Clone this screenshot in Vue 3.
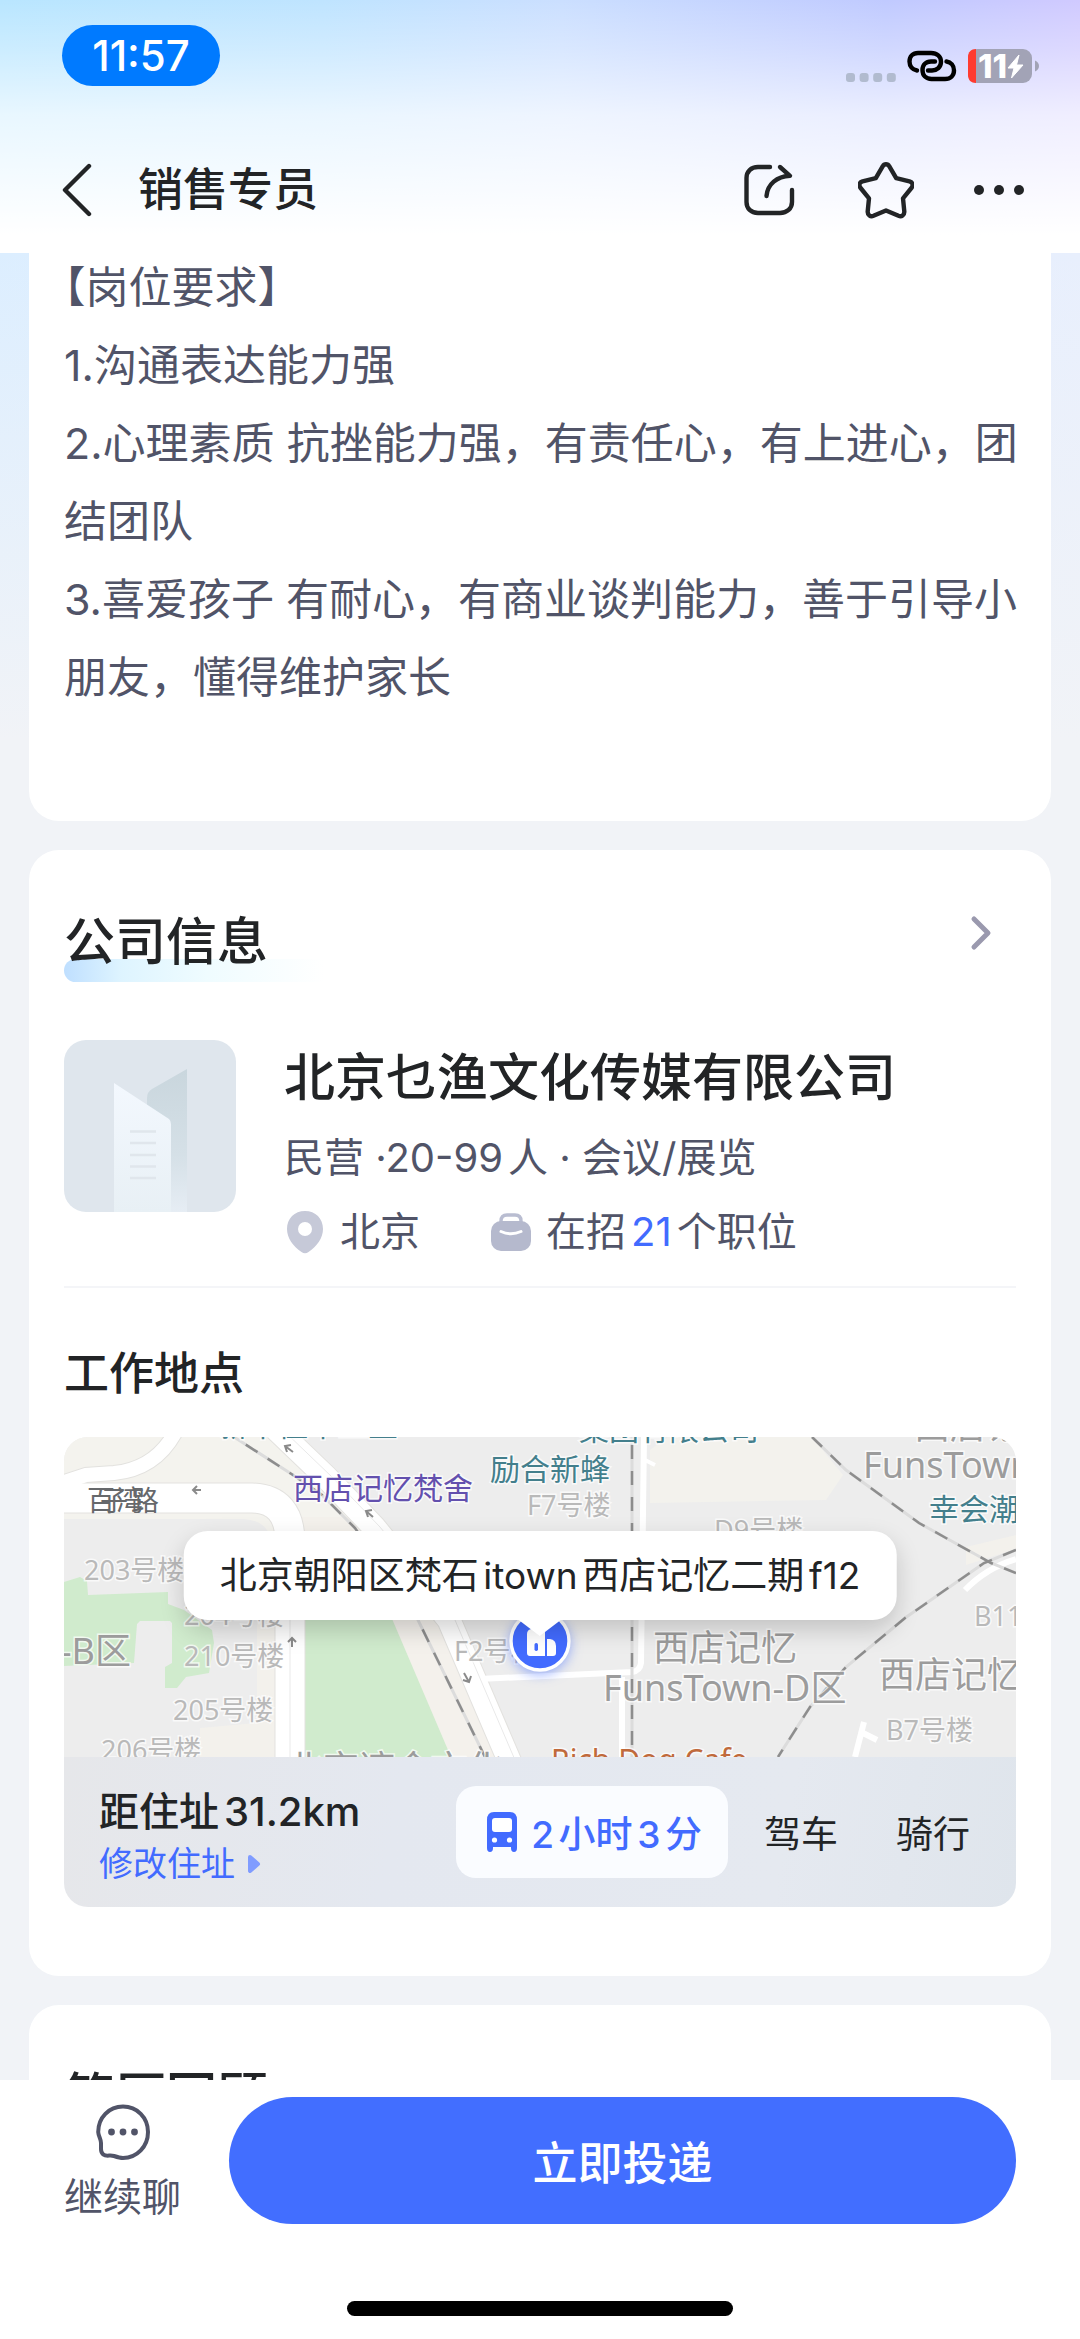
<template>
  <div class="job-page">
    <header class="top-area">
      <div class="status-bar">
        <span class="clock">11:57</span>
        <div class="status-icons">
          <svg class="signal" width="50" height="10" viewBox="0 0 50 10" aria-hidden="true">
            <rect v-for="n in 4" :key="n" :x="(n - 1) * 13.6" y="0" width="9" height="9" rx="3" fill="#b1bbcf" />
          </svg>
          <svg width="50" height="32" viewBox="0 0 50 32" fill="none" stroke="#000" stroke-width="4.4" stroke-linecap="round" aria-hidden="true">
            <path d="M10 20.5C5.6 19.8 2.5 16.5 2.5 11.5C2.5 6.5 6 3 11 3H24C30 3 34 6.5 34 11.8C34 17 30 20.5 25 20.5H21" />
            <path d="M28 11.5H24C19 11.5 15.5 15 15.5 20C15.5 25.5 19 29 24.5 29H38C43.5 29 47 25.5 47 20.5C47 15.5 44 12 39.5 11.5" />
          </svg>
          <svg width="72" height="34" viewBox="0 0 72 34" aria-hidden="true">
            <rect width="64" height="34" rx="9" fill="#a2a3b6" />
            <path d="M8 0H8V34H8C3 34 0 31 0 26V8C0 3 3 0 8 0Z" fill="#ff3b30" />
            <text x="10" y="29" class="battery-text">11</text>
            <path d="M51 6L40 19H46L43.500 29L55 16H48.500Z" fill="#fff" stroke="#fff" stroke-width="1" stroke-linejoin="round" />
            <path d="M67 11.5C69.5 12.5 71 14.5 71 17S69.5 21.5 67 22.5Z" fill="#a2a3b6" />
          </svg>
        </div>
      </div>

      <nav class="nav-bar">
        <button class="icon-button" aria-label="返回">
          <svg width="32" height="56" viewBox="0 0 32 56" fill="none" stroke="#222426" stroke-width="4.4" stroke-linecap="round" stroke-linejoin="round">
            <path d="M29 4L5 28L29 52" />
          </svg>
        </button>
        <h1 class="nav-title">销售专员</h1>
        <div class="nav-actions">
          <button class="icon-button" aria-label="分享">
            <svg width="56" height="56" viewBox="0 0 56 56" fill="none" stroke="#222426" stroke-width="4.4" stroke-linecap="round" stroke-linejoin="round">
              <path d="M28 5H16C9 5 4.5 9.5 4.5 16V40C4.5 46.5 9 51 16 51H38C45 51 50 46.5 50 40V28" />
              <path d="M38 5L48 13.8C35 14.5 25.5 22 24.5 34" />
            </svg>
          </button>
          <button class="icon-button" aria-label="收藏">
            <svg width="56" height="60" viewBox="2 0 56 60" fill="none" stroke="#222426" stroke-width="4.4" stroke-linecap="round" stroke-linejoin="round">
              <path d="M26.8 6.2C28.2 3.5 31.800 3.5 33.2 6.2L40.2 18.2L53.5 21.3C56.800 22.2 57.500 25.5 55.4 28L47 38.3L48.3 51.5C48.5 55 45.6 57 42.5 55.8L30 50.4L17.5 55.8C14.4 57 11.5 55 11.7 51.5L13 38.3L4.6 28C2.5 25.5 3.2 22.2 6.5 21.3L19.8 18.2Z" />
            </svg>
          </button>
          <button class="icon-button" aria-label="更多">
            <svg width="50" height="12" viewBox="0 0 50 12" fill="#222426">
              <circle cx="5" cy="6" r="5" />
              <circle cx="25" cy="6" r="5" />
              <circle cx="45" cy="6" r="5" />
            </svg>
          </button>
        </div>
      </nav>
    </header>

    <main class="content">
      <section class="card description">
        <p v-for="line in requirements" :key="line">{{ line }}</p>
      </section>

      <section class="card">
        <div class="card-head">
          <h2 class="card-title">公司信息</h2>
          <a href="#company" class="more-link" aria-label="查看公司">
            <svg width="26" height="42" viewBox="0 0 26 42" fill="none" stroke="#9a99ae" stroke-width="5" stroke-linecap="round" stroke-linejoin="round">
              <path d="M5 7L19 21L5 35" />
            </svg>
          </a>
        </div>

        <div class="company">
          <svg class="company-logo" viewBox="0 0 172 172" aria-hidden="true">
            <defs>
              <linearGradient id="tower-back" x1="0" y1="0" x2="0" y2="1">
                <stop offset="0" stop-color="#c9d6dd" />
                <stop offset="0.6" stop-color="#d5e0e7" />
                <stop offset="1" stop-color="#e6edf4" />
              </linearGradient>
              <linearGradient id="tower-front" x1="0" y1="0" x2="0" y2="1">
                <stop offset="0" stop-color="#f3f8fe" />
                <stop offset="1" stop-color="#e8f0f5" />
              </linearGradient>
            </defs>
            <rect width="172" height="172" fill="#dfe6ed" />
            <path d="M83 172V58Q83 52 88 49L123 29V172Z" fill="url(#tower-back)" />
            <path d="M50 43L105 79Q107 81 107 84V172H50Z" fill="url(#tower-front)" />
            <path d="M66 91.5H92M66 103H92M66 115H92M66 126.5H92M66 138H92" stroke="#e0e6ec" stroke-width="2.5" />
          </svg>
          <div class="company-text">
            <h3 class="company-name">北京乜渔文化传媒有限公司</h3>
            <p class="company-meta">民营 ·20-99人 · 会议/展览</p>
            <div class="company-facts">
              <span class="fact">
                <svg width="42" height="44" viewBox="-2 0 42 44" aria-hidden="true">
                  <path d="M19 1C29.5 1 37 8.5 37 19C37 28 31 36 22.5 42Q19 44.5 15.5 42C7 36 1 28 1 19C1 8.5 8.5 1 19 1Z" fill="#c6c9d8" />
                  <circle cx="19" cy="19" r="7" fill="#fff" />
                </svg>
                北京
              </span>
              <span class="fact">
                <svg width="42" height="40" viewBox="0 0 42 40" fill="none" aria-hidden="true">
                  <path d="M11 11V9C11 5 13 3 17 3H25C29 3 31 5 31 9V11" stroke="#b9bdd1" stroke-width="3.4" />
                  <rect x="1" y="9" width="40" height="30" rx="10" fill="#b5b9cd" />
                  <path d="M11 19.5Q21 24 31 19.5" stroke="#fff" stroke-width="3" stroke-linecap="round" />
                </svg>
                <span>在招<b class="job-count">21</b>个职位</span>
              </span>
            </div>
          </div>
        </div>

        <h3 class="place-title">工作地点</h3>

        <div class="map-card">
          <div class="map-view">
            <svg class="map-canvas" viewBox="0 0 952 320" preserveAspectRatio="xMidYMid slice">
              <rect width="952" height="320" fill="#ededed" />

              <!-- blocks of land -->
              <path d="M0 0H205L345 110H0Z" fill="#f4f3ee" />
              <path d="M0 82H180Q205 84 207 105V185H0Z" fill="#ededed" />
              <path d="M193 180H212V320H136V291L193 286Z" fill="#f3f1ec" />
              <path d="M235 80H300L375 183L432 320H235Z" fill="#f4f1ec" />
              <path d="M586 13L604 0H748L779 38L762 63L586 66Z" fill="#f3f2ed" />
              <path d="M902 110L952 98V112L902 128Z" fill="#f3f1ec" />

              <!-- greens -->
              <path d="M0 145L16 140L23 144L24 158L104 155V167L120 173L148 193L150 206L145 236L122 240L113 251H101V230L108 226V186L106 184H76L73 187L70 226L0 229Z" fill="#d0ebcd" />
              <path d="M241 170H323L387 320H241Z" fill="#d0ebcd" />

              <!-- roads -->
              <g fill="none" stroke="#e3e2df">
                <path d="M112 -6Q92 32 50 36L22 38L-6 47" stroke-width="16" />
                <path d="M-6 61H188Q226 62 226 105V326" stroke-width="31" />
                <path d="M212 -8L262 40L310 90L385 183L448 330" stroke-width="25" />
              </g>
              <g fill="none" stroke="#fff">
                <path d="M112 -6Q92 32 50 36L22 38L-6 47" stroke-width="14" />
                <path d="M-6 61H188Q226 62 226 105V326" stroke-width="29" />
                <path d="M212 -8L262 40L310 90L385 183L448 330" stroke-width="23" />
                <path d="M580 0L577 226Q576 234 568 235L415 242" stroke-width="6" />
                <path d="M558 240V320" stroke-width="6" />
                <path d="M579 22L591 28" stroke-width="4" />
                <path d="M901 153Q922 131 952 122" stroke-width="6" />
                <path d="M800 285L791 320M799 296L813 303" stroke-width="6" />
              </g>
              <path d="M218 -8L268 40L316 90L391 183L454 330M226 105V320" fill="none" stroke="#e9e9e9" stroke-width="1" />

              <!-- railways -->
              <g fill="none" stroke="#dcdcdc" stroke-width="3">
                <path d="M170 0L229 38L258 58L291 91L354 183L421 320" />
                <path d="M568 0V320" />
                <path d="M748 0L782 33L855 86L927 126L952 136" />
                <path d="M952 113L920 126L841 181L782 230L746 270L714 320" />
              </g>
              <g fill="none" stroke="#8d8d8d" stroke-width="2.5" stroke-dasharray="14 12">
                <path d="M170 0L229 38L258 58L291 91L354 183L421 320" stroke-dashoffset="12" />
                <path d="M568 8V320" />
                <path d="M748 0L782 33L855 86L927 126L952 136" />
                <path d="M952 113L920 126L841 181L782 230L746 270L714 320" />
              </g>

              <!-- driving directions -->
              <g fill="none" stroke="#8a8a8a" stroke-width="2">
                <path d="M137 53H129M133 49L129 53L133 57" />
                <path d="M229 15L221 9M227 8L221 9L223 15" />
                <path d="M309 80L302 74M308 73L302 74L304 80" />
                <path d="M228 210V201M224 205L228 201L232 205" />
                <path d="M400 236L405 245M407 239L405 245L399 243" />
              </g>

              <text v-for="(label, i) in mapLabels" :key="i" :x="label.x" :y="label.y" class="map-label" :class="label.kind">{{ label.text }}</text>
            </svg>

            <svg class="pin" width="78" height="78" viewBox="0 0 78 78" aria-hidden="true">
              <circle cx="39" cy="39" r="29" fill="#426bff" stroke="#fff" stroke-width="3.4" />
              <path d="M26 32Q26 28 30 27L44 22V54H29Q26 54 26 51Z" fill="#fff" />
              <path d="M46 37H49Q55 38 55 44V51Q55 54 52 54H46Z" fill="#fff" />
              <rect x="33.5" y="41" width="3.5" height="8" rx="1.7" fill="#426bff" />
            </svg>
            <div class="address">北京朝阳区梵石itown西店记忆二期f12</div>
          </div>

          <div class="commute">
            <div class="commute-home">
              <p class="distance">距住址31.2km</p>
              <a href="#address" class="edit-address">
                修改住址
                <svg width="14" height="18" viewBox="0 0 14 18" aria-hidden="true">
                  <path d="M3 2L11 9L3 16Z" fill="#809cff" stroke="#809cff" stroke-width="4" stroke-linejoin="round" />
                </svg>
              </a>
            </div>
            <div class="commute-modes">
              <button class="mode active">
                <svg width="32" height="42" viewBox="0 0 32 42" aria-hidden="true">
                  <path d="M8 1H24Q31 1 31 9V37Q31 41 28 41T25 37V36H7V37Q7 41 4 41T1 37V9Q1 1 8 1Z" fill="#426bff" />
                  <rect x="6" y="7" width="20" height="14" rx="3" fill="#fff" />
                  <circle cx="8.5" cy="29" r="2.6" fill="#fff" />
                  <circle cx="23.5" cy="29" r="2.6" fill="#fff" />
                </svg>
                2小时3分
              </button>
              <button class="mode">驾车</button>
              <button class="mode">骑行</button>
            </div>
          </div>
        </div>
      </section>

      <section class="card">
        <h2 class="card-title">简历回顾</h2>
      </section>
    </main>

    <footer class="action-bar">
      <div class="actions">
        <button class="chat-button">
          <svg width="56" height="58" viewBox="0 0 56 58" fill="none" aria-hidden="true">
            <path d="M28 3.5C42 3.5 53 14.5 53 29S42 55 28 55C25 55 22 54 19 53Q17 52.4 14 52.6C9 53 6 51 6 46V40Q6 38 5 35.5C4 33 3.2 31 3.2 29C3.2 14.5 14 3.5 28 3.5Z" stroke="#515468" stroke-width="4" />
            <circle cx="16.5" cy="29" r="3.4" fill="#515468" />
            <circle cx="28" cy="29" r="3.4" fill="#515468" />
            <circle cx="39.5" cy="29" r="3.4" fill="#515468" />
          </svg>
          <span>继续聊</span>
        </button>
        <button class="apply-button">立即投递</button>
      </div>
      <div class="home-indicator"></div>
    </footer>
  </div>
</template>

<script setup>
const requirements = [
  '【岗位要求】',
  '1.沟通表达能力强',
  '2.心理素质 抗挫能力强，有责任心，有上进心，团结团队',
  '3.喜爱孩子 有耐心，有商业谈判能力，善于引导小朋友，懂得维护家长'
]

const mapLabels = [
  { text: '新中佳华工业', x: 154, y: -1, kind: 'shop' },
  { text: '集团有限公司', x: 515, y: 3, kind: 'shop' },
  { text: '励合新蜂', x: 426, y: 43, kind: 'shop' },
  { text: '幸会潮玩', x: 865, y: 83, kind: 'shop' },
  { text: '西店记忆梵舍', x: 229, y: 62, kind: 'hotel' },
  { text: 'Rich Dog Cafe', x: 487, y: 334, kind: 'food' },
  { text: '百', x: 23, y: 74, kind: 'road' },
  { text: '子', x: 36, y: 74, kind: 'road' },
  { text: '湾', x: 52, y: 74, kind: 'road' },
  { text: '路', x: 67, y: 74, kind: 'road' },
  { text: 'F7号楼', x: 463, y: 78, kind: 'building' },
  { text: 'D9号楼', x: 650, y: 103, kind: 'building' },
  { text: '203号楼', x: 20, y: 143, kind: 'building' },
  { text: '204号楼', x: 120, y: 188, kind: 'building' },
  { text: '210号楼', x: 120, y: 229, kind: 'building' },
  { text: '205号楼', x: 109, y: 283, kind: 'building' },
  { text: '206号楼', x: 37, y: 323, kind: 'building' },
  { text: 'F2号楼', x: 390, y: 224, kind: 'building' },
  { text: 'B11号楼', x: 910, y: 189, kind: 'building' },
  { text: 'B7号楼', x: 822, y: 303, kind: 'building' },
  { text: '-B区', x: -4, y: 227, kind: 'area' },
  { text: '西店记忆', x: 589, y: 224, kind: 'area' },
  { text: 'FunsTown-D区', x: 539, y: 264, kind: 'area' },
  { text: '西店记忆', x: 850, y: 2, kind: 'area' },
  { text: 'FunsTown-A区', x: 799, y: 41, kind: 'area' },
  { text: '西店记忆', x: 815, y: 251, kind: 'area' },
  { text: '北京湾金文化', x: 223, y: 345, kind: 'area' }
]
</script>

<style>
body {
  margin: 0;
  background: #f1f3f7;
}
</style>

<style scoped>
.job-page {
  display: flex;
  flex-direction: column;
  height: 100vh;
  overflow: hidden;
  background:
    linear-gradient(180deg, rgba(241, 243, 247, 0) 250px, #f1f3f7 740px),
    linear-gradient(90deg, #dceeff, #e8effd);
  font-family: Inter, "Noto Sans CJK SC", sans-serif;
  color: #222426;
  text-autospace: normal;
}

h1,
h2,
h3,
p {
  margin: 0;
  font-weight: 400;
}

button {
  border: 0;
  padding: 0;
  background: none;
  color: inherit;
  font-family: inherit;
  text-autospace: inherit;
  cursor: pointer;
}

a {
  color: inherit;
  text-decoration: none;
}

svg {
  display: block;
  flex-shrink: 0;
}

.top-area {
  flex-shrink: 0;
  background:
    linear-gradient(180deg, rgba(255, 255, 255, 0), rgba(255, 255, 255, 0.28) 50px, rgba(255, 255, 255, 0.68) 115px, #fff 235px),
    linear-gradient(90deg, #b9e6ff 0%, #bfe4ff 30%, #cbdfff 52%, #c0caff 82%, #d0caff 100%);
}

.status-bar {
  display: flex;
  justify-content: space-between;
  align-items: center;
  height: 86px;
  padding: 25px 40px 0 62px;
  box-sizing: border-box;
}

.clock {
  width: 158px;
  border-radius: 31px;
  background: #007aff;
  color: #fff;
  font-size: 42px;
  font-weight: 500;
  line-height: 61px;
  text-align: center;
}

.status-icons {
  display: flex;
  align-items: center;
  gap: 11px;
  padding-top: 20px;
}

.signal {
  align-self: flex-end;
}

.battery-text {
  fill: #fff;
  font-size: 33px;
  font-weight: 800;
}

.nav-bar {
  display: flex;
  align-items: center;
  height: 127px;
  padding: 40px 56px 0 60px;
}

.nav-title {
  flex: 1;
  padding-left: 46px;
  font-size: 45px;
  font-weight: 500;
  line-height: 60px;
}

.nav-actions {
  display: flex;
  align-items: center;
  gap: 60px;
}

.content {
  flex: 1;
  min-height: 0;
  overflow: hidden;
  padding: 0 29px;
}

.card {
  padding: 62px 35px 69px;
  border-radius: 30px;
  background: #fff;
}

.card + .card {
  margin-top: 29px;
}

/* first card continues upwards under the header */
.description {
  margin-top: -5px;
  padding: 0 32px 105px 35px;
  font-size: 43px;
  line-height: 78px;
  color: #515468;
  text-spacing-trim: trim-start;
  border-radius: 0 0 30px 30px;
}

.card-head {
  display: flex;
  justify-content: space-between;
  align-items: flex-start;
}

.card-title {
  position: relative;
  z-index: 0;
  font-size: 51px;
  font-weight: 500;
  line-height: 60px;
}

.card-head .card-title::after {
  content: "";
  position: absolute;
  z-index: -1;
  left: 0;
  bottom: -10px;
  width: 260px;
  height: 23px;
  border-radius: 12px 0 0 12px;
  background: linear-gradient(90deg, #bfdfff, #def4ff 22%, #effcff 55%, rgba(255, 255, 255, 0));
}

.more-link {
  padding-right: 21px;
}

.company {
  display: flex;
  gap: 48px;
  margin-top: 68px;
  padding-bottom: 30px;
  border-bottom: 2px solid #f4f5f8;
}

.company-logo {
  width: 172px;
  height: 172px;
  border-radius: 22px;
}

.company-text {
  display: flex;
  flex-direction: column;
  gap: 26px;
  padding-top: 8px;
}

.company-name {
  font-size: 51px;
  font-weight: 500;
  line-height: 60px;
}

.company-meta,
.company-facts {
  font-size: 40px;
  line-height: 48px;
  color: #515468;
}

.company-facts {
  display: flex;
  gap: 70px;
}

.fact {
  display: flex;
  align-items: center;
  gap: 14px;
}

.job-count {
  color: #426bff;
  font-weight: 400;
}

.place-title {
  margin: 58px 0 35px;
  font-size: 45px;
  font-weight: 500;
  line-height: 56px;
}

.map-card {
  overflow: hidden;
  border-radius: 24px;
}

.map-view {
  position: relative;
  height: 320px;
}

.map-canvas {
  width: 100%;
  height: 320px;
}

.map-label {
  font-family: "Noto Sans", "Noto Sans CJK SC", sans-serif;
  text-autospace: no-autospace;
  paint-order: stroke;
  stroke: rgba(255, 255, 255, 0.7);
  stroke-width: 3px;
}

.map-label.shop {
  fill: #437f8c;
  font-size: 30px;
}

.map-label.hotel {
  fill: #6350ae;
  font-size: 30px;
}

.map-label.food {
  fill: #c06a3c;
  font-size: 30px;
}

.map-label.road {
  fill: #66686b;
  font-size: 28px;
  stroke: none;
}

.map-label.building {
  fill: #b9b9b9;
  font-size: 27px;
}

.map-label.area {
  fill: #9c9c9c;
  font-size: 36px;
}

.pin {
  position: absolute;
  left: 50%;
  top: 165px;
  margin-left: -39px;
  filter: drop-shadow(0 3px 6px rgba(66, 107, 255, 0.5));
}

.address {
  position: absolute;
  left: 50%;
  top: 94px;
  transform: translateX(-50%);
  padding: 0 36px;
  border-radius: 24px;
  background: #fff;
  box-shadow: 0 10px 24px rgba(0, 0, 0, 0.18);
  font-size: 37px;
  line-height: 89px;
  white-space: nowrap;
}

.address::after {
  content: "";
  position: absolute;
  left: 50%;
  top: 100%;
  margin-left: -21px;
  border: 21px solid transparent;
  border-top: 16px solid #fff;
  border-bottom: 0;
}

.commute {
  display: flex;
  justify-content: space-between;
  align-items: center;
  height: 150px;
  padding: 0 17px 0 35px;
  background: linear-gradient(100deg, #e6e7ea, #e4e8f0 35%, #e5e9f0 75%, #dfe5ec);
}

.commute-home {
  padding-top: 8px;
}

.distance {
  font-size: 40px;
  font-weight: 500;
  line-height: 56px;
}

.edit-address {
  display: flex;
  align-items: center;
  gap: 12px;
  color: #426bff;
  font-size: 34px;
  line-height: 48px;
}

.commute-modes {
  display: flex;
}

.mode {
  display: flex;
  align-items: center;
  gap: 13px;
  height: 92px;
  padding: 0 29px;
  font-size: 37px;
}

.mode.active {
  margin-right: 7px;
  padding: 0 26px 0 30px;
  border-radius: 20px;
  background: #fafcff;
  color: #426bff;
  font-weight: 500;
}

.action-bar {
  flex-shrink: 0;
  padding: 17px 64px 23px;
  background: #fff;
}

.actions {
  display: flex;
  gap: 48px;
}

.chat-button {
  display: flex;
  flex-direction: column;
  align-items: center;
  gap: 12px;
  padding-top: 6px;
  color: #515468;
  font-size: 39px;
  line-height: 48px;
}

.apply-button {
  flex: 1;
  height: 127px;
  border-radius: 64px;
  background: #426eff;
  color: #fff;
  font-size: 45px;
  font-weight: 500;
}

.home-indicator {
  width: 386px;
  height: 15px;
  margin: 77px auto 0;
  border-radius: 8px;
  background: #000;
}
</style>
